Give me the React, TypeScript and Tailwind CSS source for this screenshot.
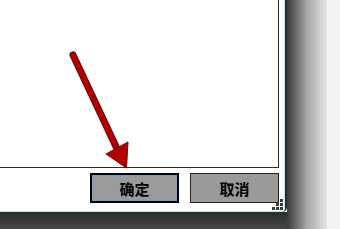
export default function App() {
  const font = { fontFamily: '"Noto Sans CJK SC", "Noto Sans", sans-serif' };

  return (
    <div className="relative flex h-[229px] w-[340px] overflow-hidden bg-[#f3f3f3]">
      {/* dialog corner + dark desktop strip */}
      <div className="flex w-[287px] shrink-0 flex-col">
        <div className="relative h-[212px] shrink-0 rounded-br-[5px] border-r-2 border-[#2a2a2a] bg-[#2a2a2a]">
          <div className="flex h-full flex-col rounded-br-[4px] border-r border-b border-[#a9eef6] bg-white pr-[5px]">
            <div className="h-[168px] shrink-0 border-r border-b border-[#2b2b2b] bg-white" />
            <div className="mt-[5px] flex justify-end gap-[11px]" style={font}>
              <button className="flex h-[30px] w-[89px] items-center justify-center border-2 border-black bg-[#6f9be0] p-px">
                <span className="flex h-full w-full items-center justify-center bg-[#9b9b9c] pt-[2px] text-[15px] font-bold text-black">
                  确定
                </span>
              </button>
              <button className="flex h-[30px] w-[89px] items-center justify-center border border-[#222] bg-[#9a9a9a] pt-[2px] text-[15px] font-bold text-black">
                取消
              </button>
            </div>
          </div>

          {/* resize grip */}
          <svg className="absolute right-[2px] bottom-[2px]" width="11" height="11" viewBox="0 0 11 11">
            {[
              [8, 0],
              [4, 4],
              [8, 4],
              [0, 8],
              [4, 8],
              [8, 8],
            ].map(([x, y], i) => (
              <rect key={i} x={x} y={y} width="3" height="3" fill="#3a3a3a" />
            ))}
          </svg>

          {/* red arrow */}
          <svg className="absolute top-0 left-0" width="140" height="175" viewBox="0 0 140 175">
            <line x1="73" y1="55" x2="119" y2="153" stroke="#7c0000" strokeWidth="7" strokeLinecap="round" />
            <line x1="73" y1="55" x2="119" y2="153" stroke="#b00000" strokeWidth="4.5" strokeLinecap="round" />
            <polygon points="106,154 128,142 126.5,168" fill="#b00000" stroke="#7c0000" strokeWidth="1" strokeLinejoin="round" />
          </svg>
        </div>
        <div className="flex-1 bg-gradient-to-b from-[#2c2c2c] to-[#474747]" />
      </div>

      {/* window shadow */}
      <div className="w-[40px] shrink-0 bg-gradient-to-r from-[#3c3c3c] via-[#a8a8a8] to-[#e4e4e4]" />
      <div className="flex-1 bg-[#f3f3f3]" />
    </div>
  );
}
